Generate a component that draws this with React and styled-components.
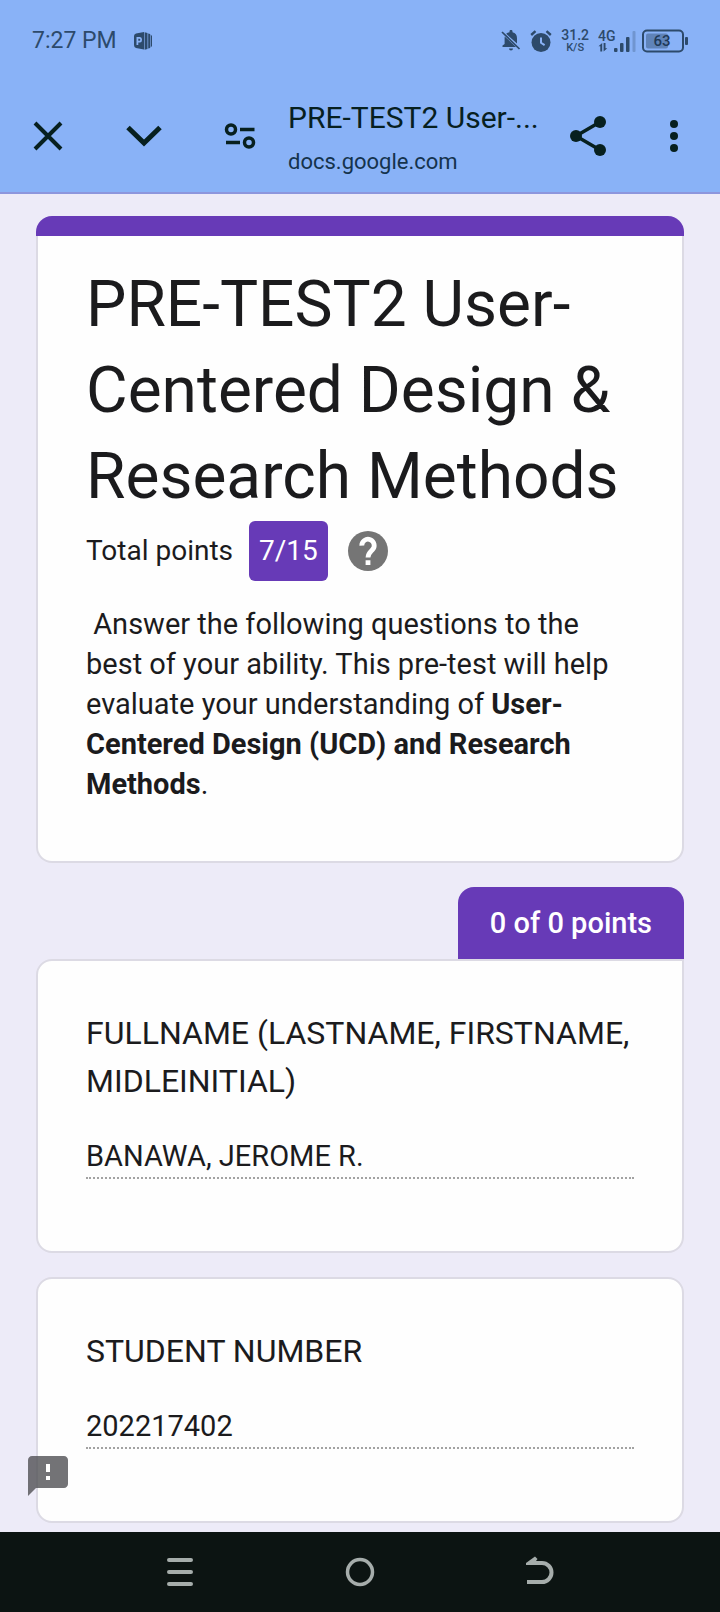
import React from 'react';
import styled, { createGlobalStyle } from 'styled-components';

const GlobalStyle = createGlobalStyle`
  *, *::before, *::after { box-sizing: border-box; }
  html, body { margin: 0; padding: 0; }
  body {
    background: #edebf8;
    color: #1b1b1d;
    font-family: Roboto, "Liberation Sans", sans-serif;
  }
  svg { display: block; flex: none; }
`;

const Screen = styled.div`
  min-height: 100vh;
  display: flex;
  flex-direction: column;
`;

const Header = styled.header`
  background: #89b2f7;
  border-bottom: 2px solid #8d96dd;
`;

const StatusBar = styled.div`
  display: flex;
  align-items: center;
  justify-content: space-between;
  height: 80px;
  padding: 2px 32px 0;
  color: #2d4a6b;
`;

const StatusGroup = styled.div`
  display: flex;
  align-items: center;
  gap: ${({ $gap }) => $gap}px;
`;

const Clock = styled.time`
  font-size: 23px;
  line-height: 32px;
`;

const Speed = styled.div`
  display: flex;
  flex-direction: column;
  align-items: center;
  font-size: 14px;
  line-height: 14px;
  font-weight: 500;
`;

const SpeedUnit = styled.span`
  font-size: 11px;
  line-height: 12px;
`;

const Toolbar = styled.div`
  display: flex;
  align-items: center;
  height: 112px;
  padding-right: 8px;
  color: #07201f;
`;

const IconButton = styled.button`
  display: flex;
  flex: none;
  align-items: center;
  justify-content: center;
  width: ${({ $width }) => $width || 96}px;
  height: 96px;
  padding: 0;
  border: 0;
  background: none;
  color: inherit;
`;

const PageInfo = styled.div`
  flex: 1;
  min-width: 0;
  padding-top: 4px;
  white-space: nowrap;
`;

const PageTitle = styled.div`
  font-size: 30px;
  line-height: 40px;
`;

const PageHost = styled.div`
  margin-top: 8px;
  font-size: 22px;
  line-height: 32px;
  color: #15334d;
`;

const Main = styled.main`
  position: relative;
  flex: 1;
  padding: 22px 36px 8px;
`;

const Card = styled.section`
  background: #fefefe;
  border: 2px solid #dcdae4;
  border-radius: ${({ $tabbed }) => ($tabbed ? '16px 0 16px 16px' : '16px')};
  padding: 48px 48px 72px;
  margin-bottom: 24px;

  &:last-of-type { margin-bottom: 0; }
`;

const IntroStrip = styled.div`
  height: 20px;
  border-radius: 16px 16px 0 0;
  background: #673ab7;
`;

const IntroCard = styled(Card)`
  border-top: 0;
  border-radius: 0 0 16px 16px;
  padding: 26px 48px 57px;
`;

const FormTitle = styled.h1`
  margin: 0;
  font-size: 64px;
  line-height: 86px;
  font-weight: 400;
`;

const PointsRow = styled.div`
  display: flex;
  align-items: center;
  height: 60px;
  margin-top: 1px;
  font-size: 28px;
  line-height: 40px;
`;

const Score = styled.span`
  display: flex;
  align-items: center;
  height: 60px;
  margin: 0 16px;
  padding: 0 10px;
  border-radius: 6px;
  background: #673ab7;
  color: #fff;
`;

const HelpButton = styled(IconButton)`
  height: 48px;
  color: #757575;
`;

const Description = styled.p`
  margin: 23px 0 0;
  font-size: 29px;
  line-height: 40px;
  white-space: pre-wrap;

  strong { font-weight: 700; }
`;

const TabRow = styled.div`
  display: flex;
  justify-content: flex-end;
`;

const PointsTab = styled.div`
  height: 72px;
  padding: 0 32px;
  border-radius: 16px 16px 0 0;
  background: #673ab7;
  color: #fff;
  font-size: 29px;
  line-height: 72px;
  font-weight: 500;
`;

const QuestionLabel = styled.label`
  display: block;
  font-size: 32px;
  line-height: 48px;
`;

const AnswerInput = styled.input`
  display: block;
  width: 100%;
  height: 42px;
  margin-top: 32px;
  padding: 0 0 2px;
  border: 0;
  border-bottom: 2px dotted #a2a2a2;
  border-radius: 0;
  background: none;
  color: inherit;
  font-family: inherit;
  font-size: 29px;
  line-height: 38px;
  outline: none;
`;

const FeedbackButton = styled(IconButton)`
  position: absolute;
  left: 24px;
  bottom: 32px;
  height: 48px;
  color: rgba(80, 80, 84, 0.8);
`;

const NavBar = styled.nav`
  display: flex;
  justify-content: space-between;
  height: 80px;
  padding: 0 132px;
  background: #0c1412;
  color: #a6adab;
`;

const NavButton = styled(IconButton)`
  height: 80px;
`;

function PowerPointIcon() {
  return (
    <svg width="20" height="20" viewBox="0 0 20 20" fill="currentColor" aria-hidden="true">
      <path fillRule="evenodd" d="M3 2.500 11 1v17.500L3 17Q1 16.500 1 14V5Q1 3 3 2.500ZM3.500 6v8h1.800v-2.500H7Q9 11.500 9 8.800T7 6ZM5.300 7.800h1.200q.8 0 .8 1t-.8 1H5.300Z" />
      <path d="M11.600 1.200 14.500 2v16l-2.900.8ZM15.200 2.400l1.900.6v14l-1.900.6ZM17.700 3.400 19 5v10l-1.300 1.600Z" />
    </svg>
  );
}

function BellOffIcon() {
  return (
    <svg width="20" height="22" viewBox="0 0 20 22" fill="currentColor" aria-hidden="true">
      <path d="M5.200 3.800Q6.500 2.600 8.500 2.200V1.400a1.500 1.500 0 0 1 3 0v.8q4.500 1 4.500 6V13.500ZM3.700 6.400 15 17H1.500v-1.500L3.600 14V8.500q0-1.200.1-2.100ZM8 18.500h4a2 2 0 0 1-4 0Z" />
      <path d="m1 2 17.500 17" fill="none" stroke="currentColor" strokeWidth="1.700" />
    </svg>
  );
}

function AlarmIcon() {
  return (
    <svg width="22" height="24" viewBox="0 0 22 24" aria-hidden="true">
      <circle cx="11" cy="13.500" r="9.500" fill="currentColor" />
      <path d="M1.200 6 5.500 2.200M20.800 6 16.500 2.200" stroke="currentColor" strokeWidth="2.400" fill="none" />
      <path d="M11 8.500v5.300l3.600 2.400" stroke="#89b2f7" strokeWidth="2" fill="none" />
    </svg>
  );
}

function SignalIcon() {
  return (
    <svg width="38" height="32" viewBox="0 -4 38 32" aria-hidden="true">
      <text x="0" y="12" fontSize="14" fontWeight="500" fontFamily="Roboto, sans-serif" fill="currentColor">4G</text>
      <g fill="currentColor">
        <path d="M4.200 14v8.500H2.300v-5.300H.5L4.200 14ZM5.600 14h1.900v5.300h1.800L5.600 22.500Z" />
        <rect x="16" y="19" width="3.500" height="4" rx="1" />
        <rect x="22" y="14" width="3.500" height="9" rx="1" />
        <rect x="28" y="8" width="3.500" height="15" rx="1" />
        <rect x="34.500" y="2" width="3" height="21" rx="1" opacity=".28" />
      </g>
    </svg>
  );
}

function BatteryIcon() {
  return (
    <svg width="46" height="24" viewBox="0 0 46 24" aria-hidden="true">
      <rect x="1" y="1.500" width="40" height="21" rx="4" fill="none" stroke="currentColor" strokeWidth="2" />
      <rect x="4" y="4.500" width="22" height="15" rx="2" fill="currentColor" opacity=".45" />
      <rect x="43" y="8" width="3" height="8" rx="1" fill="currentColor" />
      <text x="20" y="17" textAnchor="middle" fontSize="15" fontWeight="500" fontFamily="Roboto, sans-serif" fill="#1f3a58">63</text>
    </svg>
  );
}

function CloseIcon() {
  return (
    <svg width="32" height="32" viewBox="0 0 32 32" fill="none" stroke="currentColor" strokeWidth="4" aria-hidden="true">
      <path d="m3 3 26 26M29 3 3 29" />
    </svg>
  );
}

function ChevronIcon() {
  return (
    <svg width="40" height="32" viewBox="0 0 40 32" fill="none" stroke="currentColor" strokeWidth="5" aria-hidden="true">
      <path d="m4 7.500 16 15.500L36 7.500" />
    </svg>
  );
}

function TuneIcon() {
  return (
    <svg width="32" height="28" viewBox="0 0 32 28" fill="none" stroke="currentColor" strokeWidth="3.500" aria-hidden="true">
      <circle cx="7" cy="7.500" r="4.500" />
      <path d="M16 7.500h14.500M2 20.500h14" />
      <circle cx="25" cy="20.500" r="4.500" />
    </svg>
  );
}

function ShareIcon() {
  return (
    <svg width="40" height="40" viewBox="0 0 40 40" fill="currentColor" aria-hidden="true">
      <path d="M32 6 8 20l24 14" fill="none" stroke="currentColor" strokeWidth="3.500" />
      <circle cx="32" cy="6" r="6" />
      <circle cx="8" cy="20" r="6" />
      <circle cx="32" cy="34" r="6" />
    </svg>
  );
}

function MoreIcon() {
  return (
    <svg width="8" height="32" viewBox="0 0 8 32" fill="currentColor" aria-hidden="true">
      <circle cx="4" cy="4" r="4" />
      <circle cx="4" cy="16" r="4" />
      <circle cx="4" cy="28" r="4" />
    </svg>
  );
}

function HelpIcon() {
  return (
    <svg width="48" height="48" viewBox="0 0 24 24" aria-hidden="true">
      <circle cx="12" cy="12" r="10" fill="currentColor" />
      <path d="M8.900 9.300a3.100 3.100 0 1 1 5.300 2.100c-1.200 1.200-2.200 1.700-2.200 3.900" fill="none" stroke="#fff" strokeWidth="2.400" />
      <path d="M10.800 16.600h2.400V19h-2.400z" fill="#fff" />
    </svg>
  );
}

function FeedbackIcon() {
  return (
    <svg width="48" height="48" viewBox="0 0 24 24" aria-hidden="true">
      <path d="M11 6h2v4h-2zM11 12h2v2h-2z" fill="#fff" />
      <path fill="currentColor" d="M20 2H4c-1.100 0-1.990.9-1.990 2L2 22l4-4h14c1.100 0 2-.9 2-2V4c0-1.100-.9-2-2-2zm-7 12h-2v-2h2v2zm0-4h-2V6h2v4z" />
    </svg>
  );
}

function RecentsIcon() {
  return (
    <svg width="28" height="32" viewBox="0 0 28 32" stroke="currentColor" strokeWidth="4" strokeLinecap="round" aria-hidden="true">
      <path d="M3 4h22M3 16h22M3 28h22" />
    </svg>
  );
}

function HomeIcon() {
  return (
    <svg width="32" height="32" viewBox="0 0 32 32" fill="none" stroke="currentColor" strokeWidth="3.500" aria-hidden="true">
      <circle cx="16" cy="16" r="12.500" />
    </svg>
  );
}

function BackIcon() {
  return (
    <svg width="32" height="32" viewBox="0 0 32 32" fill="none" stroke="currentColor" strokeWidth="4" aria-hidden="true">
      <path d="M3 26h15a9.500 9.500 0 0 0 0-19H7" />
      <path d="M2 9V7l9-6.500 2.500 2.500L9 9Z" fill="currentColor" stroke="none" />
    </svg>
  );
}

function Question({ id, label, answer, tabbed }) {
  return (
    <Card $tabbed={tabbed}>
      <QuestionLabel htmlFor={id}>{label}</QuestionLabel>
      <AnswerInput id={id} type="text" value={answer} readOnly />
    </Card>
  );
}

export default function App() {
  return (
    <Screen>
      <GlobalStyle />
      <Header>
        <StatusBar>
          <StatusGroup $gap={16}>
            <Clock>7:27 PM</Clock>
            <PowerPointIcon />
          </StatusGroup>
          <StatusGroup $gap={9}>
            <BellOffIcon />
            <AlarmIcon />
            <Speed>
              <span>31.2</span>
              <SpeedUnit>K/S</SpeedUnit>
            </Speed>
            <StatusGroup $gap={6}>
              <SignalIcon />
              <BatteryIcon />
            </StatusGroup>
          </StatusGroup>
        </StatusBar>
        <Toolbar>
          <IconButton type="button" aria-label="Close"><CloseIcon /></IconButton>
          <IconButton type="button" aria-label="Minimize"><ChevronIcon /></IconButton>
          <IconButton type="button" aria-label="Site settings"><TuneIcon /></IconButton>
          <PageInfo>
            <PageTitle>PRE-TEST2 User-...</PageTitle>
            <PageHost>docs.google.com</PageHost>
          </PageInfo>
          <IconButton type="button" aria-label="Share"><ShareIcon /></IconButton>
          <IconButton type="button" aria-label="More options" $width={76}><MoreIcon /></IconButton>
        </Toolbar>
      </Header>

      <Main>
        <IntroStrip />
        <IntroCard>
          <FormTitle>PRE-TEST2 User-Centered Design &amp; Research Methods</FormTitle>
          <PointsRow>
            Total points
            <Score>7/15</Score>
            <HelpButton type="button" aria-label="Help" $width={48}><HelpIcon /></HelpButton>
          </PointsRow>
          <Description>
            {' Answer the following questions to the best of your ability. This pre-test will help evaluate your understanding of '}
            <strong>User-Centered Design (UCD) and Research Methods</strong>.
          </Description>
        </IntroCard>

        <TabRow>
          <PointsTab>0 of 0 points</PointsTab>
        </TabRow>
        <Question
          id="fullname"
          label="FULLNAME (LASTNAME, FIRSTNAME, MIDLEINITIAL)"
          answer="BANAWA, JEROME R."
          tabbed
        />
        <Question id="student-number" label="STUDENT NUMBER" answer="202217402" />

        <FeedbackButton type="button" aria-label="Report a problem" $width={48}>
          <FeedbackIcon />
        </FeedbackButton>
      </Main>

      <NavBar>
        <NavButton type="button" aria-label="Recent apps"><RecentsIcon /></NavButton>
        <NavButton type="button" aria-label="Home"><HomeIcon /></NavButton>
        <NavButton type="button" aria-label="Back"><BackIcon /></NavButton>
      </NavBar>
    </Screen>
  );
}
